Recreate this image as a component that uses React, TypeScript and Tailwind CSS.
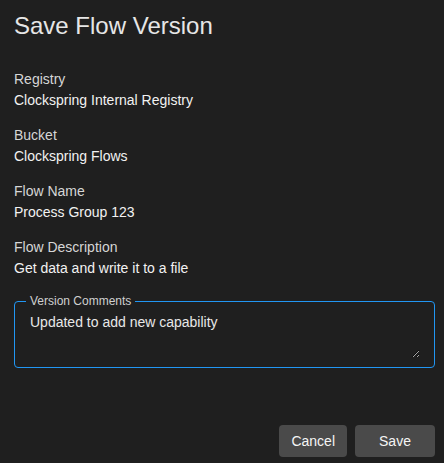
import React from "react";

const fields = [
  { label: "Registry", value: "Clockspring Internal Registry" },
  { label: "Bucket", value: "Clockspring Flows" },
  { label: "Flow Name", value: "Process Group 123" },
  { label: "Flow Description", value: "Get data and write it to a file" },
];

export default function App() {
  return (
    <div
      className="flex h-[463px] w-[444px] flex-col bg-[#1f1f1f] pl-[14px] pr-[9px] pt-[10px] pb-[6px] [color-scheme:dark]"
      style={{ fontFamily: '"Liberation Sans", Arial, sans-serif' }}
    >
      <h1 className="text-[24px] leading-8 font-normal text-[#e6e6e6]">Save Flow Version</h1>
      <div className="mt-[27px] flex flex-col gap-[14px]">
        {fields.map((f) => (
          <div key={f.label} className="flex flex-col text-[14px] leading-[21px]">
            <span className="text-[#d6d6d6]">{f.label}</span>
            <span className="text-[#f2f2f2]">{f.value}</span>
          </div>
        ))}
      </div>
      <fieldset className="mt-[15px] rounded-[4px] border border-[#2196f3] pl-[11px] pr-[14px] pb-[9px]">
        <legend className="px-1 text-[12px] leading-[14px] text-[#d0d0d0]">Version Comments</legend>
        <textarea
          className="block h-[50px] w-full resize-y bg-transparent pl-1 pt-1 text-[14px] leading-[21px] text-[#e8e8e8] outline-none"
          defaultValue="Updated to add new capability"
        />
      </fieldset>
      <div className="mt-auto flex justify-end gap-2">
        <button className="h-[32px] rounded-[4px] bg-[#4a4a4a] px-3 text-[14px] text-[#f5f5f5]">Cancel</button>
        <button className="h-[32px] min-w-[80px] rounded-[4px] bg-[#4a4a4a] px-3 text-[14px] text-[#f5f5f5]">Save</button>
      </div>
    </div>
  );
}
